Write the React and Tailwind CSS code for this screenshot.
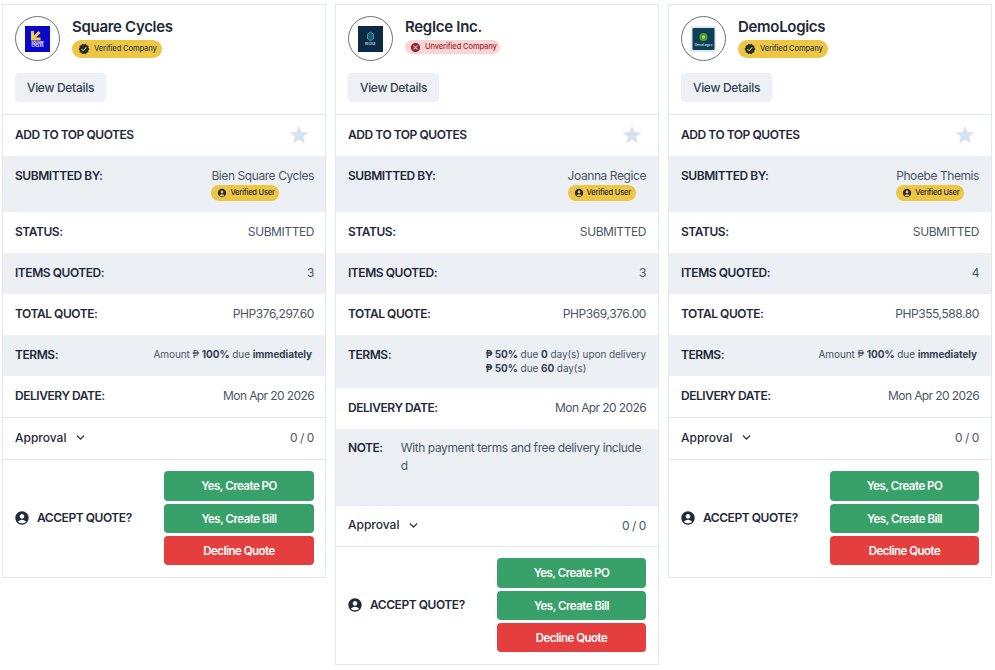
import React from 'react'
import { MdAccountCircle, MdCancel, MdStar, MdVerified } from 'react-icons/md'
import { LuChevronDown } from 'react-icons/lu'

const SquareLogo = () => (
    <svg width="25" height="26" viewBox="0 0 25 26">
        <rect width="25" height="26" fill="#0a07c8" />
        <path d="M6 5h3v4.5L13.5 5l2 2L11 11.5h4.5v3H6z" fill="#f2c94c" />
        <text x="12.5" y="18" textAnchor="middle" fontSize="3" fontWeight="700" fill="#fff" fontFamily="Inter">SQUARE</text>
        <text x="12.5" y="21" textAnchor="middle" fontSize="3" fontWeight="700" fill="#fff" fontFamily="Inter">CYCLES</text>
    </svg>
)

const RegiceLogo = () => (
    <svg width="25" height="26" viewBox="0 0 25 26">
        <rect width="25" height="26" fill="#0c2a45" />
        <path d="M12.5 6l3 2.2v4.4l-3 2.2-3-2.2V8.200z" fill="#1c5a72" stroke="#3f9fb0" strokeWidth="1" />
        <text x="12.5" y="18.500" textAnchor="middle" fontSize="3" fontWeight="600" fill="#cfe0ea" fontFamily="Inter">REGICE</text>
    </svg>
)

const DemoLogo = () => (
    <svg width="25" height="26" viewBox="0 0 25 26">
        <rect width="25" height="26" fill="#e3e8e8" />
        <rect x="1.500" y="2" width="22" height="22" rx="1" fill="#0c3f58" />
        <circle cx="12.5" cy="11" r="4" fill="#4e9a3a" />
        <circle cx="12.5" cy="11" r="1.800" fill="#b8c72f" />
        <text x="12.5" y="20" textAnchor="middle" fontSize="3" fill="#fff" fontFamily="Inter">DemoLogics</text>
    </svg>
)

const Row = ({ label, children, shaded, className = '' }) => (
    <div className={`flex justify-between pt-[11px] pr-[var(--edge)] pl-[12px] ${shaded ? 'bg-[#ecf0f5]' : 'bg-white'} ${className}`}>
        <span className="text-[12px] leading-[17px] font-semibold tracking-[-0.45px] text-[#1f2937]">{label}</span>
        {children}
    </div>
)

const Value = ({ children }) => (
    <span className="text-[12px] leading-[17px] tracking-[-0.42px] text-[#4b5563]">{children}</span>
)

const QuoteCard = ({ name, logo, verified, user, items, total, terms, termsClass = 'h-[41px]', note, edgeClass }) => (
    <div className={`w-[324px] shrink-0 self-start border border-[#e2e7ee] bg-white ${edgeClass}`}>
        <div className="h-[110px] border-b border-[#e2e7ee] pt-[11px] pr-[11px] pl-[12px]">
            <div className="flex gap-[12px]">
                <div className="flex size-[45px] shrink-0 items-center justify-center rounded-full border border-[#6b7280]">
                    {logo}
                </div>
                <div className="-mt-[1px]">
                    <div className="text-[15px] leading-[23px] font-semibold tracking-[-0.3px] text-[#1f2937]">{name}</div>
                    {verified ? (
                        <span className="mt-[2px] flex h-[18px] w-[90px] items-center gap-[4px] rounded-full bg-[#eec643] pl-[6px] text-[7.5px] font-medium tracking-[-0.1px] whitespace-nowrap text-[#374151]">
                            <MdVerified className="size-[12px] text-[#1f2f2c]" />
                            Verified Company
                        </span>
                    ) : (
                        <span className="mt-[2px] flex h-[14px] w-[95px] items-center gap-[4px] rounded-full bg-[#fbd5d5] pl-[5px] text-[7.5px] font-medium tracking-[-0.1px] whitespace-nowrap text-[#9b2c2c]">
                            <MdCancel className="size-[11px] text-[#8f2530]" />
                            Unverified Company
                        </span>
                    )}
                </div>
            </div>
            <button className="mt-[12px] h-[29px] w-[91px] rounded-[4px] bg-[#edf1f6] text-[12px] font-medium tracking-[-0.3px] text-[#374151]">
                View Details
            </button>
        </div>
        <div className="flex h-[41px] items-center justify-between bg-white pr-[15px] pb-[2px] pl-[12px]">
            <span className="text-[12px] font-semibold tracking-[-0.45px] text-[#1f2937]">ADD TO TOP QUOTES</span>
            <MdStar className="size-[22px] text-[#d9e2ec]" />
        </div>
        <Row label="SUBMITTED BY:" shaded className="h-[56px]">
            <div className="flex flex-col items-start">
                <Value>{user}</Value>
                <span className="mt-[1px] flex h-[16px] w-[68px] items-center gap-[3px] rounded-full bg-[#eec643] pl-[6px] text-[7.5px] font-medium tracking-[-0.2px] whitespace-nowrap text-[#1f2937]">
                    <MdAccountCircle className="size-[10px]" />
                    Verified User
                </span>
            </div>
        </Row>
        <Row label="STATUS:" className="h-[41px]"><Value>SUBMITTED</Value></Row>
        <Row label="ITEMS QUOTED:" shaded className="h-[41px]"><Value>{items}</Value></Row>
        <Row label="TOTAL QUOTE:" className="h-[41px]"><Value>{total}</Value></Row>
        <Row label="TERMS:" shaded className={termsClass}>
            <div className="mt-[1px] text-[10px] leading-[14px] tracking-[-0.07px] text-[#4b5563]">{terms}</div>
        </Row>
        <Row label="DELIVERY DATE:" className={note ? 'h-[41px]' : 'h-[42px] border-b border-[#e2e7ee]'}>
            <Value><span className="tracking-[-0.6px]">Mon Apr 20 2026</span></Value>
        </Row>
        {note && (
            <div className="flex h-[77px] gap-[18px] border-b border-[#e2e7ee] bg-[#ecf0f5] pt-[10px] pr-[var(--edge)] pl-[12px]">
                <span className="text-[12px] leading-[18px] font-semibold tracking-[-0.45px] text-[#1f2937]">NOTE:</span>
                <p className="w-[242px] text-[12px] leading-[18px] tracking-[-0.4px] break-all text-[#4b5563]">{note}</p>
            </div>
        )}
        <div className={`flex items-center justify-between border-b border-[#e2e7ee] pr-[var(--edge)] pb-[2px] pl-[12px] ${note ? 'h-[41px]' : 'h-[42px]'}`}>
            <span className="flex items-center gap-[8px] text-[12px] font-medium text-[#1f2937]">
                Approval
                <LuChevronDown className="size-[13px]" strokeWidth={2.5} />
            </span>
            <Value>0 / 0</Value>
        </div>
        <div className="flex h-[117px] items-center justify-between pr-[var(--edge)] pb-[1px] pl-[11px]">
            <span className="flex items-center gap-[7px] text-[12px] font-semibold tracking-[-0.45px] text-[#1f2937]">
                <MdAccountCircle className="size-[16px]" />
                ACCEPT QUOTE?
            </span>
            <div className="flex w-[var(--btn)] flex-col gap-[3px] text-[11.5px] font-semibold tracking-[-0.5px] text-white">
                <button className="h-[30px] rounded-[4px] bg-[#38a169] pt-[2px]">Yes, Create PO</button>
                <button className="h-[29px] rounded-[4px] bg-[#38a169] pt-[2px]">Yes, Create Bill</button>
                <button className="h-[29px] rounded-[4px] bg-[#e53e3e] pt-[2px]">Decline Quote</button>
            </div>
        </div>
    </div>
)

const immediately = (
    <div className="mr-[2px]">Amount ₱ <b className="font-bold text-[#374151]">100%</b> due <b className="font-bold text-[#374151]">immediately</b></div>
)

const split = (
    <>
        <div><b className="font-bold text-[#374151]">₱ 50%</b> due <b className="font-bold text-[#374151]">0</b> day(s) upon delivery</div>
        <div><b className="font-bold text-[#374151]">₱ 50%</b> due <b className="font-bold text-[#374151]">60</b> day(s)</div>
    </>
)

const App = () => {
    return (
        <div className="flex h-[670px] w-[995px] gap-[9px] overflow-hidden bg-white pt-[4px] pl-[2px] font-['Inter',sans-serif]">
            <QuoteCard edgeClass="[--edge:11px] [--btn:150px]" name="Square Cycles" logo={<SquareLogo />} verified user="Bien Square Cycles" items="3" total="PHP376,297.60" terms={immediately} />
            <QuoteCard edgeClass="[--edge:12px] [--btn:149px]" name="RegIce Inc." logo={<RegiceLogo />} user="Joanna Regice" items="3" total="PHP369,376.00" terms={split} termsClass="h-[53px]" note="With payment terms and free delivery included" />
            <QuoteCard edgeClass="[--edge:12px] [--btn:149px]" name="DemoLogics" logo={<DemoLogo />} verified user="Phoebe Themis" items="4" total="PHP355,588.80" terms={immediately} />
        </div>
    )
}

export default App
